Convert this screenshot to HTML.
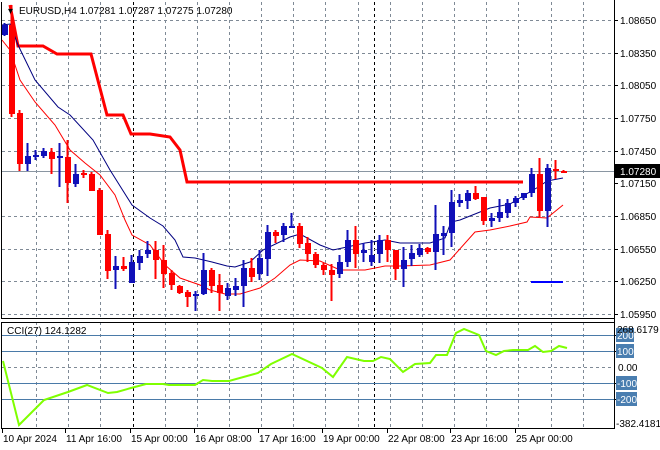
<!DOCTYPE html>
<html><head><meta charset="utf-8"><style>
html,body{margin:0;padding:0;background:#fff;width:660px;height:450px;overflow:hidden}
svg{display:block;font-family:"Liberation Sans",Tahoma,sans-serif;font-size:10px}
</style></head><body>
<svg id="s" width="660" height="450" viewBox="0 0 660 450" xmlns="http://www.w3.org/2000/svg" shape-rendering="crispEdges">
<rect width="660" height="450" fill="#fff"/>
<g id="grid" stroke="#7f8a96" stroke-dasharray="3,3" stroke-width="1"></g>
<!-- current price line -->
<line x1="2" y1="171.5" x2="614" y2="171.5" stroke="#8a96a2"/>
<!-- CCI levels -->
<g stroke="#4a7aa8">
<line x1="2" y1="335.5" x2="614" y2="335.5"/><line x1="2" y1="351.5" x2="614" y2="351.5"/>
<line x1="2" y1="383.5" x2="614" y2="383.5"/><line x1="2" y1="399.5" x2="614" y2="399.5"/>
</g>
<line x1="2" y1="367.5" x2="614" y2="367.5" stroke="#7f8a96" stroke-dasharray="3,3"/>
<g shape-rendering="auto" fill="none">
<polyline stroke="#ff0000" stroke-width="3" points="10,5 18,46 43,46 57,54 91,54 107,115 123,115 131,134 150,134 170,137 180,150 187,182 523,182"/>
<polyline stroke="#000080" stroke-width="1" points="2,25 10,24 18,45 35,80 58,107 70,115 93,140 110,170 132,205 150,218 163,226 175,240 183,257 195,258 212,262 227,266 235,267 250,262 263,250 290,237 300,234 320,245 333,250 347,247 365,243 385,240 400,243 430,243 445,238 451,222 460,220 490,208 510,204 523,196 540,186 547,181 563,178"/>
<polyline stroke="#ff0000" stroke-width="1" points="2,40 10,50 20,80 35,102 55,125 70,150 85,163 100,175 115,195 125,220 132,235 150,245 165,265 180,278 200,285 210,290 225,294 240,294 260,288 275,278 290,265 300,260 320,261 340,270 365,270 385,266 400,266 430,265 450,260 475,232 490,230 510,226 527,222 530,217 547,218 563,205"/>
<polyline stroke="#7fff00" stroke-width="2" points="3,361 19,425 44,400 68,392 87,385 108,393 117,392 131,388 146,384 163,384 169,385 195,385 203,380 212,381 229,381 258,373 271,364 292,354 322,368 333,377 347,357 364,361 373,361 381,357 390,359 403,372 415,364 430,363 436,355 447,355 456,333 464,329 479,335 486,351 496,355 504,351 513,350 528,350 535,346 543,352 551,351 559,346 567,348"/>
</g>
<g id="candles"></g>
<line x1="531" y1="282" x2="563" y2="282" stroke="#0000ff" stroke-width="2"/>
<!-- frames -->
<g stroke="#000" fill="none">
<line x1="1.5" y1="2" x2="1.5" y2="318"/><line x1="1.5" y1="322" x2="1.5" y2="429"/>
<line x1="1" y1="318.5" x2="614" y2="318.5"/><line x1="1" y1="322.5" x2="614" y2="322.5"/>
<line x1="1" y1="428.5" x2="614" y2="428.5"/>
<line x1="614.5" y1="0" x2="614.5" y2="429"/>
</g>
<g id="ticks" stroke="#000"></g>
<g id="labels" fill="#000"></g>
<rect x="615" y="164" width="45" height="14" fill="#000"/>
<text x="620" y="175" fill="#fff">1.07280</text>
<text x="8" y="14">▾</text>
<text x="19" y="14">EURUSD,H4  1.07281 1.07287 1.07275 1.07280</text>
<text x="7" y="334">CCI(27) 124.1282</text>
</svg>
<script>
var NS="http://www.w3.org/2000/svg";
function el(p,t,a,txt){var e=document.createElementNS(NS,t);for(var k in a)e.setAttribute(k,a[k]);if(txt)e.textContent=txt;document.getElementById(p).appendChild(e);}
var vx=[36,68,100,133,165,197,229,261,293,325,358,374,390,422,454,486,518,551,583];
vx.forEach(function(x){var b=(x==133||x==374);
 el('grid','line',{x1:x+.5,y1:2,x2:x+.5,y2:318,stroke:b?'#000':'#7f8a96'});
 el('grid','line',{x1:x+.5,y1:322,x2:x+.5,y2:428,stroke:b?'#000':'#7f8a96'});});
var ph=[["1.08650",20],["1.08350",53],["1.08050",85],["1.07750",118],["1.07450",151],["1.07150",183],["1.06850",216],["1.06550",249],["1.06250",281],["1.05950",314]];
ph.forEach(function(p){if(p[1]!=183) el('grid','line',{x1:2,y1:p[1]+.5,x2:614,y2:p[1]+.5});
 el('ticks','line',{x1:614,y1:p[1]+.5,x2:618,y2:p[1]+.5});
 if(p[1]!=183||true) el('labels','text',{x:620,y:p[1]+4},p[0]);});
var C=[[4,35,25,23,36,'b'],[11,25,114,5,117,'r'],[19,113,164,110,171,'r'],[27,164,156,143,171,'b'],[35,157,155,150,160,'b'],[43,156,151,148,158,'b'],[51,152,159,148,174,'r'],[59,158,156,143,187,'b'],[67,157,183,140,203,'r'],[75,184,174,164,187,'b'],[83,173,175,170,178,'r'],[91,174,191,172,191,'r'],[99,190,235,188,235,'r'],[107,234,271,230,279,'r'],[115,270,266,256,289,'b'],[123,266,269,257,271,'r'],[131,283,262,255,283,'b'],[139,263,256,250,270,'b'],[147,254,250,241,258,'b'],[155,250,260,241,279,'r'],[163,260,274,245,288,'r'],[171,273,285,270,290,'r'],[179,286,293,285,294,'r'],[187,292,297,290,307,'r'],[195,296,294,291,311,'b'],[203,294,270,253,295,'b'],[211,270,286,268,293,'r'],[219,285,293,274,311,'r'],[227,296,288,283,300,'b'],[235,290,286,278,296,'b'],[243,286,268,260,307,'b'],[251,268,277,258,282,'r'],[259,274,258,250,280,'b'],[267,259,232,225,276,'b'],[275,232,236,230,243,'r'],[283,235,226,223,242,'b'],[291,227,226,213,227,'b'],[299,226,244,223,248,'r'],[307,243,254,237,262,'r'],[315,254,265,252,268,'r'],[323,265,270,263,275,'r'],[331,270,275,264,301,'r'],[339,274,262,255,278,'b'],[347,262,240,230,267,'b'],[355,240,254,226,268,'r'],[363,253,250,243,262,'b'],[371,262,255,240,266,'b'],[379,254,240,235,263,'b'],[387,240,250,235,262,'r'],[395,250,269,250,280,'r'],[403,269,260,247,287,'b'],[411,259,253,245,266,'b'],[419,255,248,244,257,'b'],[427,248,252,247,254,'r'],[435,252,234,205,270,'b'],[443,236,233,226,255,'b'],[451,233,202,190,247,'b'],[459,203,200,194,207,'b'],[467,201,193,190,209,'b'],[475,193,199,186,200,'r'],[483,197,221,197,225,'r'],[491,221,218,213,227,'b'],[499,218,212,199,222,'b'],[507,213,203,199,218,'b'],[515,203,198,196,207,'b'],[523,198,193,193,200,'b'],[531,193,174,168,197,'b'],[539,174,211,158,217,'r'],[547,211,168,164,227,'b'],[555,169,170,160,179,'r'],[563,171,171,170,172,'r']];
C.forEach(function(c){var col=c[5]=='b'?'#1010b8':'#ff0000';
 el('candles','line',{x1:c[0]+.5,y1:c[3],x2:c[0]+.5,y2:c[4],stroke:col,'stroke-width':2});
 var t=Math.min(c[1],c[2]),h=Math.max(Math.abs(c[1]-c[2]),2);
 el('candles','rect',{x:c[0]-2,y:t,width:6,height:h,fill:col});});
[["200",335],["100",351],["-100",383],["-200",399]].forEach(function(l){
 var w=l[0].length>3?21:18;
 el('labels','rect',{x:616,y:l[1]-7,width:w,height:14,fill:'#4a7eb0'});
 el('labels','text',{x:617,y:l[1]+4,fill:'#fff'},l[0]);
 el('ticks','line',{x1:614,y1:l[1]+.5,x2:617,y2:l[1]+.5});});
el('labels','text',{x:618,y:371},"0.00");
el('labels','text',{x:617,y:333},"268.6179");
el('labels','text',{x:616,y:427},"-382.4181");
[["10 Apr 2024",3],["11 Apr 16:00",66],["15 Apr 00:00",131],["16 Apr 08:00",195],["17 Apr 16:00",259],["19 Apr 00:00",323],["22 Apr 08:00",388],["23 Apr 16:00",451],["25 Apr 00:00",516]].forEach(function(t){
 el('labels','text',{x:t[1],y:442},t[0]);
 el('ticks','line',{x1:t[1]-0.5,y1:429,x2:t[1]-0.5,y2:433});});
</script>
</body></html>
